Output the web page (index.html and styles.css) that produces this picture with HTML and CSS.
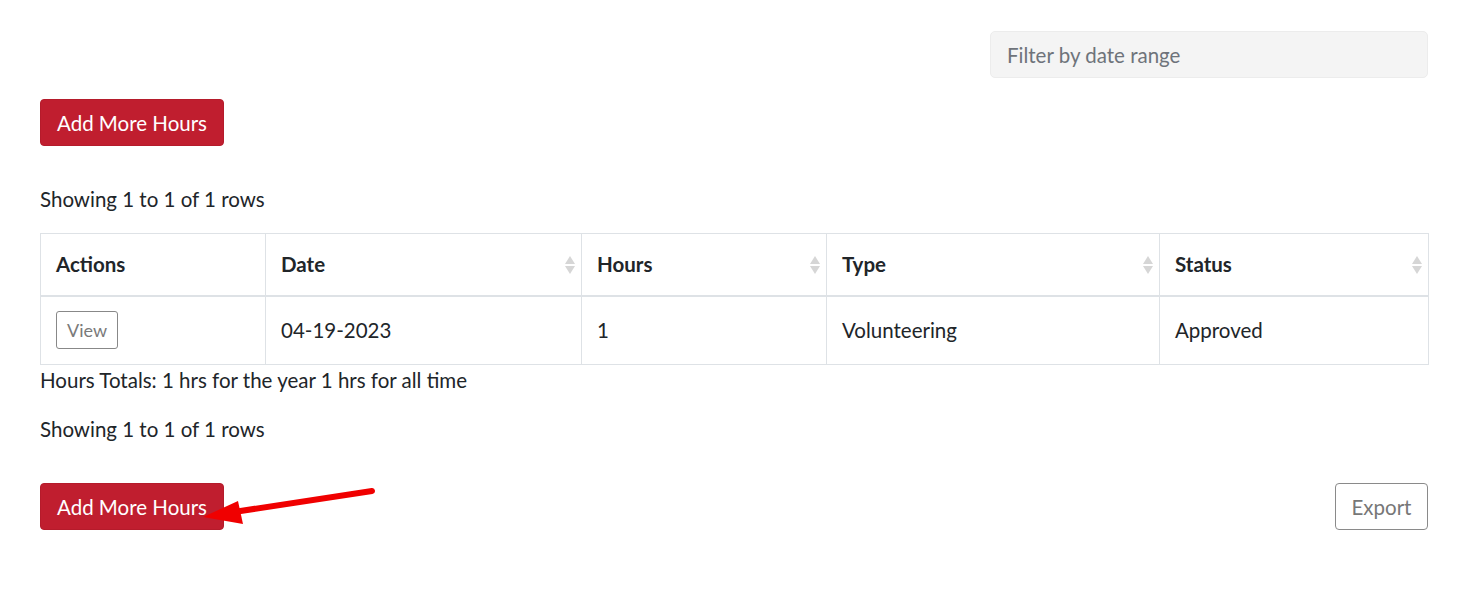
FILE: index.html
```html
<!DOCTYPE html>
<html>
<head>
<meta charset="utf-8">
<link rel="stylesheet" href="styles.css">
</head>
<body>
<div class="page">
  <div class="toolbar">
    <input class="filter" type="text" placeholder="Filter by date range">
  </div>
  <div class="btn-row">
    <button class="btn-red">Add More Hours</button>
  </div>
  <div class="info">Showing 1 to 1 of 1 rows</div>
  <table class="grid">
    <colgroup>
      <col style="width:225px"><col style="width:316px"><col style="width:245px"><col style="width:333px"><col style="width:269px">
    </colgroup>
    <thead>
      <tr>
        <th>Actions</th>
        <th class="sortable">Date<span class="sort"></span></th>
        <th class="sortable">Hours<span class="sort"></span></th>
        <th class="sortable">Type<span class="sort"></span></th>
        <th class="sortable">Status<span class="sort"></span></th>
      </tr>
    </thead>
    <tbody>
      <tr>
        <td><button class="btn-view">View</button></td>
        <td>04-19-2023</td>
        <td>1</td>
        <td>Volunteering</td>
        <td>Approved</td>
      </tr>
    </tbody>
  </table>
  <div class="totals">Hours Totals: 1 hrs for the year 1 hrs for all time</div>
  <div class="info info2">Showing 1 to 1 of 1 rows</div>
  <div class="bottom">
    <button class="btn-red">Add More Hours</button>
    <button class="btn-export">Export</button>
  </div>
  <svg class="arrow" width="200" height="60" viewBox="0 0 200 60">
    <line x1="172" y1="11" x2="34" y2="32" stroke="#f00000" stroke-width="6" stroke-linecap="round"/>
    <polygon points="3,37 38,21 43,44" fill="#f00000"/>
  </svg>
</div>
</body>
</html>
```
FILE: styles.css
```css
* { box-sizing: border-box; }
body {
  margin: 0;
  background: #fff;
  font-family: Lato, "Open Sans", sans-serif;
  color: #212529;
}
.page {
  position: relative;
  padding: 31px 32px 0 40px;
}
.toolbar {
  display: flex;
  justify-content: flex-end;
}
.filter {
  width: 438px;
  height: 47px;
  background: #f4f4f4;
  border: 1px solid #ececec;
  border-radius: 5px;
  padding: 0 16px;
  font-family: inherit;
  font-size: 20.5px;
  color: #6c757d;
  outline: none;
}
.filter::placeholder { color: #6e737a; }
.btn-row { margin-top: 21px; }
.btn-red {
  width: 184px;
  height: 47px;
  background: #c01e2f;
  color: #fff;
  border: 1px solid #b51b2b;
  border-radius: 4px;
  font-family: inherit;
  font-size: 20.5px;
  padding: 0;
}
.info {
  margin-top: 39px;
  font-size: 20.5px;
  line-height: 28px;
}
.grid {
  margin-top: 20px;
  width: 1388px;
  border-collapse: collapse;
  table-layout: fixed;
  font-size: 20.5px;
}
.grid th, .grid td {
  border: 1px solid #dee2e6;
  text-align: left;
  padding: 0 15px;
}
.grid th {
  height: 62px;
  font-weight: bold;
  border-bottom: 2px solid #dee2e6;
  position: relative;
}
.grid td { height: 69px; }
.sort {
  position: absolute;
  right: 6px;
  top: 22px;
  width: 10px;
  height: 18px;
}
.sort::before, .sort::after {
  content: "";
  position: absolute;
  left: 0;
  border-left: 5px solid transparent;
  border-right: 5px solid transparent;
}
.sort::before { top: 0; border-bottom: 8px solid #d6d6d6; }
.sort::after { top: 10px; border-top: 8px solid #d6d6d6; }
.btn-view {
  height: 38px;
  width: 62px;
  background: #fff;
  border: 1px solid #888;
  border-radius: 3px;
  color: #7a7a7a;
  font-family: inherit;
  font-size: 18px;
  padding: 0;
}
.totals {
  font-size: 20.5px;
  line-height: 28px;
  margin-top: 1px;
}
.info2 { margin-top: 21px; }
.bottom {
  margin-top: 40px;
  display: flex;
  justify-content: space-between;
}
.btn-export {
  width: 93px;
  height: 47px;
  background: #fff;
  border: 1px solid #8a8a8a;
  border-radius: 4px;
  color: #777;
  font-family: inherit;
  font-size: 20.5px;
  padding: 0;
}
.arrow {
  position: absolute;
  left: 200px;
  top: 480px;
}
```
